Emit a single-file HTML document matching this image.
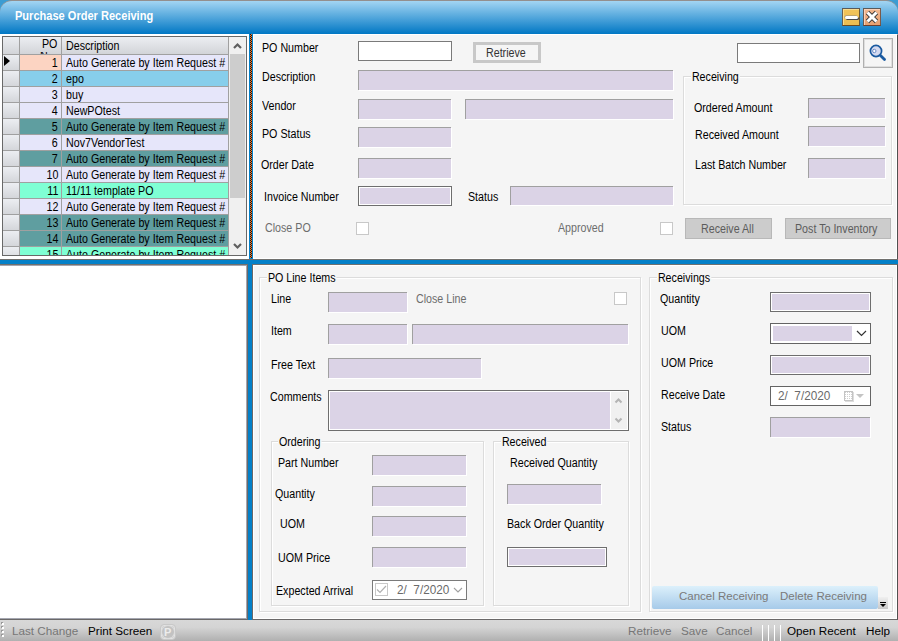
<!DOCTYPE html>
<html><head><meta charset="utf-8"><style>
*{margin:0;padding:0;box-sizing:border-box}
html,body{width:898px;height:641px;overflow:hidden;background:#f5f5f5;font-family:"Liberation Sans",sans-serif;font-size:11px;color:#000}
.a{position:absolute}
.t{position:absolute;white-space:nowrap;line-height:12px;font-size:12px;transform:scaleX(0.89);transform-origin:0 0}
.tb{position:absolute;background:#dbd3e6;border-top:1px solid #a0a0a0;border-left:1px solid #a0a0a0;box-shadow:1px 1px 0 #fff}
.tbd{position:absolute;background:#dbd3e6;border:1px solid #6e6e6e;box-shadow:inset 0 0 0 1px #fff}
.gb{position:absolute;border:1px solid #dcdcdc;box-shadow:inset 1px 1px 0 #fff,1px 1px 0 #fff}
.gt{position:absolute;white-space:nowrap;line-height:12px;font-size:12px;transform:scaleX(0.89);transform-origin:0 0;background:#f5f5f5;padding:0 1px}
.cb{position:absolute;width:13px;height:13px;border:1px solid #c8c8c8;background:#fff}
.g{color:#6d6d6d}
.g2{color:#5c5c5c}
.row{position:absolute;left:2px;width:227px;height:16px}
.rh{position:absolute;left:0;top:0;width:17px;height:16px;background:linear-gradient(#eceef2,#d4d6da);border-right:1px solid #a0a0a0;border-bottom:1px solid #a0a0a0}
.c1{position:absolute;left:17px;top:0;width:42px;height:16px;border-right:1px solid #a0a0a0;border-bottom:1px solid #a0a0a0;text-align:right;padding-right:4px;line-height:15px;font-size:12px}
.c2{position:absolute;left:59px;top:0;width:167px;height:16px;border-bottom:1px solid #a0a0a0;border-right:1px solid #a0a0a0;overflow:hidden}
.sb{font-size:11.7px;line-height:14px;transform:none}
</style></head><body>

<div class="a" style="left:0;top:0;width:14px;height:14px;background:#3c9cd2"></div><div class="a" style="left:884px;top:0;width:14px;height:14px;background:#3c9cd2"></div>
<div class="a" style="left:0;top:0;width:898px;height:34px;border-radius:12px 12px 0 0;background:linear-gradient(#a3d5f3,#0077c4);border-top:1px solid #938f8e;box-shadow:inset 0 0 0 0 #000"></div>
<div class="t" style="left:15px;top:9px;color:#fff;font-weight:bold;font-size:13px;line-height:14px;transform:scaleX(0.85)">Purchase Order Receiving</div>
<div class="a" style="left:842px;top:8px;width:18px;height:18px;background:linear-gradient(#f2c45a,#ecbc50);border:1px solid;border-color:#5a5a5a #6a5a3a #6a4a20 #6a6050;box-shadow:inset 1px 1px 0 #f8dc90"><div class="a" style="left:2px;top:7px;width:13px;height:3px;background:#fff;border-radius:1.5px;box-shadow:1px 1px 0 #4a4a4a,-0.5px -0.5px 0 #8a8a8a"></div></div>
<div class="a" style="left:863px;top:8px;width:18px;height:18px;background:linear-gradient(#f2b890,#e8a070);border:1px solid;border-color:#5a5a5a #7a5a4a #6a4030 #6a5a50;box-shadow:inset 1px 1px 0 #f8d0b8"><svg class="a" style="left:0;top:0" width="16" height="16"><path d="M3.5 3.5L12.5 12.5M12.5 3.5L3.5 12.5" stroke="#3a3a3a" stroke-width="4.6"/><path d="M3.5 3.5L12.5 12.5M12.5 3.5L3.5 12.5" stroke="#fff" stroke-width="3"/></svg></div>
<div class="a" style="left:0;top:34px;width:249px;height:225px;background:#fff"></div>
<div class="a" style="left:253px;top:34px;width:645px;height:225px;background:#f5f5f5;border-top:1px solid #fff;border-left:1px solid #fff;border-right:1px solid #505050;box-shadow:inset -1px -1px 0 #fff"></div>
<div class="a" style="left:249px;top:34px;width:4px;height:225px;background:#0480c8"></div>
<div class="a" style="left:250px;top:34px;width:2px;height:224px;background:repeating-conic-gradient(#f07828 0 25%,#181818 0 50%) 0 0/2px 2px"></div>
<div class="a" style="left:0;top:259px;width:898px;height:1px;background:#70706e"></div>
<div class="a" style="left:0;top:260px;width:898px;height:4px;background:#0480c8"></div>
<div class="a" style="left:0;top:264px;width:248px;height:356px;background:#fff;border-top:1px solid #70706e;border-right:1px solid #6a6868;border-bottom:1px solid #6a6868;box-shadow:inset -1px -1px 0 #a4a6b0,inset 0 1px 0 #a4a6b0"></div>
<div class="a" style="left:248px;top:264px;width:4px;height:356px;background:#0480c8"></div>
<div class="a" style="left:252px;top:264px;width:646px;height:356px;background:#f5f5f5;border-top:1px solid #70706e;border-left:1px solid #6a6868;border-bottom:1px solid #6a6868;border-right:1px solid #505050;box-shadow:inset 1px 1px 0 #fff,inset -1px -1px 0 #fff"></div>
<div class="a" style="left:2px;top:36px;width:245px;height:220px;border:1px solid #686868;background:#fff;overflow:hidden">
<div class="a" style="left:0;top:0;width:226px;height:17px;background:linear-gradient(#eceef2,#d2d4d8)"></div>
<div class="a" style="left:16px;top:0;width:1px;height:17px;background:#a0a0a0"></div>
<div class="a" style="left:58px;top:0;width:1px;height:17px;background:#a0a0a0"></div>
<div class="a" style="left:225px;top:0;width:1px;height:17px;background:#a0a0a0"></div>
<div class="a" style="left:0;top:17px;width:226px;height:1px;background:#a0a0a0"></div>
<div class="t" style="left:39px;top:1px">PO</div><div class="t" style="left:37px;top:15px;height:2px;overflow:hidden;line-height:12px"><span style="position:relative;top:-2px">N</span></div>
<div class="t" style="left:63px;top:3px">Description</div>
<div class="row" style="left:0;top:18px"><div class="rh"></div><div class="c1" style="background:#fcd4c2"></div><div class="c2" style="background:#e6e6fa"><div class="t" style="left:4px;top:2px">Auto Generate by Item Request #</div></div><div class="t" style="right:172px;top:2px;transform-origin:100% 0">1</div></div>
<div class="row" style="left:0;top:34px"><div class="rh"></div><div class="c1" style="background:#87ceeb"></div><div class="c2" style="background:#87ceeb"><div class="t" style="left:4px;top:2px">epo</div></div><div class="t" style="right:172px;top:2px;transform-origin:100% 0">2</div></div>
<div class="row" style="left:0;top:50px"><div class="rh"></div><div class="c1" style="background:#e6e6fa"></div><div class="c2" style="background:#e6e6fa"><div class="t" style="left:4px;top:2px">buy</div></div><div class="t" style="right:172px;top:2px;transform-origin:100% 0">3</div></div>
<div class="row" style="left:0;top:66px"><div class="rh"></div><div class="c1" style="background:#e6e6fa"></div><div class="c2" style="background:#e6e6fa"><div class="t" style="left:4px;top:2px">NewPOtest</div></div><div class="t" style="right:172px;top:2px;transform-origin:100% 0">4</div></div>
<div class="row" style="left:0;top:82px"><div class="rh"></div><div class="c1" style="background:#5f9ea0"></div><div class="c2" style="background:#5f9ea0"><div class="t" style="left:4px;top:2px">Auto Generate by Item Request #</div></div><div class="t" style="right:172px;top:2px;transform-origin:100% 0">5</div></div>
<div class="row" style="left:0;top:98px"><div class="rh"></div><div class="c1" style="background:#e6e6fa"></div><div class="c2" style="background:#e6e6fa"><div class="t" style="left:4px;top:2px">Nov7VendorTest</div></div><div class="t" style="right:172px;top:2px;transform-origin:100% 0">6</div></div>
<div class="row" style="left:0;top:114px"><div class="rh"></div><div class="c1" style="background:#5f9ea0"></div><div class="c2" style="background:#5f9ea0"><div class="t" style="left:4px;top:2px">Auto Generate by Item Request #</div></div><div class="t" style="right:172px;top:2px;transform-origin:100% 0">7</div></div>
<div class="row" style="left:0;top:130px"><div class="rh"></div><div class="c1" style="background:#e6e6fa"></div><div class="c2" style="background:#e6e6fa"><div class="t" style="left:4px;top:2px">Auto Generate by Item Request #</div></div><div class="t" style="right:172px;top:2px;transform-origin:100% 0">10</div></div>
<div class="row" style="left:0;top:146px"><div class="rh"></div><div class="c1" style="background:#7fffd4"></div><div class="c2" style="background:#7fffd4"><div class="t" style="left:4px;top:2px">11/11 template PO</div></div><div class="t" style="right:172px;top:2px;transform-origin:100% 0">11</div></div>
<div class="row" style="left:0;top:162px"><div class="rh"></div><div class="c1" style="background:#e6e6fa"></div><div class="c2" style="background:#e6e6fa"><div class="t" style="left:4px;top:2px">Auto Generate by Item Request #</div></div><div class="t" style="right:172px;top:2px;transform-origin:100% 0">12</div></div>
<div class="row" style="left:0;top:178px"><div class="rh"></div><div class="c1" style="background:#5f9ea0"></div><div class="c2" style="background:#5f9ea0"><div class="t" style="left:4px;top:2px">Auto Generate by Item Request #</div></div><div class="t" style="right:172px;top:2px;transform-origin:100% 0">13</div></div>
<div class="row" style="left:0;top:194px"><div class="rh"></div><div class="c1" style="background:#5f9ea0"></div><div class="c2" style="background:#5f9ea0"><div class="t" style="left:4px;top:2px">Auto Generate by Item Request #</div></div><div class="t" style="right:172px;top:2px;transform-origin:100% 0">14</div></div>
<div class="row" style="left:0;top:210px"><div class="rh"></div><div class="c1" style="background:#7fffd4"></div><div class="c2" style="background:#7fffd4"><div class="t" style="left:4px;top:2px">Auto Generate by Item Request #</div></div><div class="t" style="right:172px;top:2px;transform-origin:100% 0">15</div></div>
<div class="a" style="left:1px;top:19px;width:0;height:0;border-top:5.5px solid transparent;border-bottom:5.5px solid transparent;border-left:6px solid #000"></div>
<div class="a" style="left:226px;top:0;width:17px;height:218px;background:#f0f0f0"></div>
<div class="a" style="left:227px;top:17px;width:15px;height:144px;background:#cdcdcd"></div>
<svg class="a" style="left:229px;top:4px" width="11" height="9"><path d="M2 7L5.5 3.5L9 7" stroke="#606060" stroke-width="2.2" fill="none"/></svg>
<svg class="a" style="left:229px;top:205px" width="11" height="9"><path d="M2 2L5.5 5.5L9 2" stroke="#606060" stroke-width="2.2" fill="none"/></svg>
</div>
<div class="t " style="left:262px;top:42px">PO Number</div>
<div class="a" style="left:358px;top:41px;width:94px;height:20px;background:#fff;border:1px solid #7a7a7a"></div>
<div class="a" style="left:473px;top:42px;width:68px;height:21px;background:#f5f5f5;border:3px solid #c8c8c8"></div>
<div class="t" style="left:486px;top:47px;color:#333">Retrieve</div>
<div class="a" style="left:737px;top:43px;width:123px;height:20px;background:#fff;border:1px solid #7a7a7a"></div>
<div class="a" style="left:863px;top:38px;width:30px;height:30px;background:#f5f5f5;border:1px solid #b0b0b0;box-shadow:inset 0 0 0 1px #dedede"></div>
<svg class="a" style="left:863px;top:38px" width="30" height="30"><circle cx="13" cy="13" r="5.6" fill="#d4daf0" stroke="#1a5aa0" stroke-width="1.7"/><circle cx="11.3" cy="13" r="1.7" fill="#fff" stroke="#6a8cc8" stroke-width="1"/><path d="M17.5 17.5L21.5 21.5" stroke="#1a5aa0" stroke-width="2.8" stroke-linecap="round"/></svg>
<div class="t " style="left:262px;top:71px">Description</div>
<div class="tb" style="left:358px;top:70px;width:315px;height:20px"></div>
<div class="t " style="left:262px;top:100px">Vendor</div>
<div class="tb" style="left:358px;top:99px;width:93px;height:20px"></div>
<div class="tb" style="left:465px;top:99px;width:208px;height:20px"></div>
<div class="t " style="left:262px;top:128px">PO Status</div>
<div class="tb" style="left:358px;top:127px;width:93px;height:20px"></div>
<div class="t " style="left:261px;top:159px">Order Date</div>
<div class="tb" style="left:358px;top:158px;width:93px;height:20px"></div>
<div class="t " style="left:264px;top:191px">Invoice Number</div>
<div class="tbd" style="left:358px;top:186px;width:94px;height:20px"></div>
<div class="t " style="left:468px;top:191px">Status</div>
<div class="tb" style="left:510px;top:186px;width:163px;height:19px"></div>
<div class="t g" style="left:265px;top:222px">Close PO</div>
<div class="cb" style="left:356px;top:222px"></div>
<div class="t g" style="left:558px;top:222px">Approved</div>
<div class="cb" style="left:660px;top:222px"></div>
<div class="gb" style="left:683px;top:76px;width:209px;height:129px"></div>
<div class="gt" style="left:691px;top:71px">Receiving</div>
<div class="t " style="left:694px;top:102px">Ordered Amount</div>
<div class="tb" style="left:808px;top:98px;width:77px;height:20px"></div>
<div class="t " style="left:695px;top:129px">Received Amount</div>
<div class="tb" style="left:808px;top:126px;width:77px;height:20px"></div>
<div class="t " style="left:695px;top:159px">Last Batch Number</div>
<div class="tb" style="left:808px;top:158px;width:77px;height:20px"></div>
<div class="a" style="left:685px;top:218px;width:87px;height:21px;background:#cccccc;border:1px solid #b8b8b8"></div>
<div class="t g2" style="left:701px;top:223px">Receive All</div>
<div class="a" style="left:785px;top:218px;width:106px;height:21px;background:#cccccc;border:1px solid #b8b8b8"></div>
<div class="t g2" style="left:795px;top:223px">Post To Inventory</div>
<div class="gb" style="left:259px;top:277px;width:382px;height:335px"></div>
<div class="gt" style="left:267px;top:272px">PO Line Items</div>
<div class="t " style="left:271px;top:293px">Line</div>
<div class="tb" style="left:328px;top:292px;width:79px;height:20px"></div>
<div class="t g" style="left:416px;top:293px">Close Line</div>
<div class="cb" style="left:614px;top:292px"></div>
<div class="t " style="left:271px;top:325px">Item</div>
<div class="tb" style="left:328px;top:324px;width:79px;height:20px"></div>
<div class="tb" style="left:412px;top:324px;width:216px;height:20px"></div>
<div class="t " style="left:271px;top:359px">Free Text</div>
<div class="tb" style="left:328px;top:358px;width:153px;height:20px"></div>
<div class="t " style="left:270px;top:391px">Comments</div>
<div class="tbd" style="left:328px;top:390px;width:301px;height:41px"></div>
<div class="a" style="left:610px;top:392px;width:17px;height:37px;background:#f0f0f0;border-left:1px solid #fff"></div>
<svg class="a" style="left:614px;top:396px" width="10" height="30"><path d="M1.5 6.5L4.5 3.5L7.5 6.5M1.5 22.5L4.5 25.5L7.5 22.5" stroke="#b4b4b4" stroke-width="2" fill="none"/></svg>
<div class="gb" style="left:271px;top:441px;width:213px;height:165px"></div>
<div class="gt" style="left:278px;top:436px">Ordering</div>
<div class="t " style="left:278px;top:457px">Part Number</div>
<div class="tb" style="left:372px;top:455px;width:94px;height:20px"></div>
<div class="t " style="left:275px;top:488px">Quantity</div>
<div class="tb" style="left:372px;top:486px;width:94px;height:20px"></div>
<div class="t " style="left:280px;top:518px">UOM</div>
<div class="tb" style="left:372px;top:516px;width:94px;height:20px"></div>
<div class="t " style="left:278px;top:552px">UOM Price</div>
<div class="tb" style="left:372px;top:547px;width:94px;height:20px"></div>
<div class="t " style="left:276px;top:585px">Expected Arrival</div>
<div class="a" style="left:372px;top:580px;width:95px;height:20px;background:#fff;border:1px solid #7a7a7a"></div>
<div class="a" style="left:375px;top:583px;width:13px;height:13px;border:1px solid #c8c8c8"></div>
<svg class="a" style="left:375px;top:583px" width="13" height="13"><path d="M2 6.5L5 9.5L11 3" stroke="#b0b0b0" stroke-width="1.2" fill="none"/></svg>
<div class="t g" style="left:397px;top:584px;font-size:12px;line-height:13px;color:#6a6a6a;transform:scaleX(0.98)">2/&nbsp; 7/2020</div>
<svg class="a" style="left:453px;top:587px" width="10" height="6"><path d="M1 1L5 5L9 1" stroke="#a0a0a0" stroke-width="1.1" fill="none"/></svg>
<div class="gb" style="left:493px;top:441px;width:136px;height:165px"></div>
<div class="gt" style="left:501px;top:436px">Received</div>
<div class="t " style="left:510px;top:457px">Received Quantity</div>
<div class="tb" style="left:507px;top:484px;width:94px;height:20px"></div>
<div class="t " style="left:507px;top:518px">Back Order Quantity</div>
<div class="tbd" style="left:507px;top:547px;width:100px;height:20px"></div>
<div class="gb" style="left:649px;top:277px;width:244px;height:335px"></div>
<div class="gt" style="left:657px;top:272px">Receivings</div>
<div class="t " style="left:660px;top:293px">Quantity</div>
<div class="tbd" style="left:770px;top:292px;width:101px;height:20px"></div>
<div class="t " style="left:661px;top:325px">UOM</div>
<div class="a" style="left:770px;top:323px;width:101px;height:21px;background:#fff;border:1px solid #646464"></div>
<div class="a" style="left:773px;top:326px;width:79px;height:15px;background:#dbd3e6"></div>
<svg class="a" style="left:856px;top:330px" width="11" height="7"><path d="M1 1L5.5 5.5L10 1" stroke="#333" stroke-width="1.2" fill="none"/></svg>
<div class="t " style="left:661px;top:357px">UOM Price</div>
<div class="tbd" style="left:770px;top:355px;width:101px;height:20px"></div>
<div class="t " style="left:661px;top:389px">Receive Date</div>
<div class="a" style="left:770px;top:386px;width:101px;height:20px;background:#fff;border:1px solid #646464"></div>
<div class="t" style="left:778px;top:390px;font-size:12px;line-height:13px;color:#6a6a6a;transform:scaleX(0.98)">2/&nbsp; 7/2020</div>
<div class="a" style="left:844px;top:391px;width:9px;height:10px;border:1px solid #c4c4c4;background:linear-gradient(90deg,transparent 50%,#fff 50%) 0 0/2px 2px,linear-gradient(transparent 50%,#fff 50%) 0 0/2px 2px,#d0d0d0;box-shadow:1px 1px 0 #ddd"></div>
<div class="a" style="left:856px;top:394px;width:0;height:0;border-left:4px solid transparent;border-right:4px solid transparent;border-top:4px solid #c4c4c4"></div>
<div class="t " style="left:661px;top:421px">Status</div>
<div class="tb" style="left:770px;top:417px;width:100px;height:20px"></div>
<div class="a" style="left:652px;top:586px;width:226px;height:23px;background:linear-gradient(#dcf0fb,#a6cae9);border-radius:2px"></div>
<div class="t sb" style="left:679px;top:589px;color:#7a7a7a;font-size:11.5px">Cancel Receiving</div>
<div class="t sb" style="left:780px;top:589px;color:#7a7a7a;font-size:11.5px">Delete Receiving</div>
<div class="a" style="left:878px;top:597px;width:10px;height:12px;background:linear-gradient(#f0f0f0,#c8c8c8)"></div>
<div class="a" style="left:880px;top:602px;width:6px;height:1px;background:#000"></div>
<div class="a" style="left:880px;top:604px;width:0;height:0;border-left:3px solid transparent;border-right:3px solid transparent;border-top:3px solid #000"></div>
<div class="a" style="left:0;top:620px;width:898px;height:21px;background:linear-gradient(#d8d8d8 0%,#d4d4d4 35%,#b0b0b0 100%)"></div>
<div class="a" style="left:2px;top:623px;width:2px;height:2px;background:#fff;box-shadow:-1px -1px 0 #999"></div>
<div class="a" style="left:2px;top:627px;width:2px;height:2px;background:#fff;box-shadow:-1px -1px 0 #999"></div>
<div class="a" style="left:2px;top:631px;width:2px;height:2px;background:#fff;box-shadow:-1px -1px 0 #999"></div>
<div class="a" style="left:2px;top:635px;width:2px;height:2px;background:#fff;box-shadow:-1px -1px 0 #999"></div>
<div class="t sb" style="left:12px;top:624px;color:#767676">Last Change</div>
<div class="t sb" style="left:88px;top:624px;color:#000">Print Screen</div>
<div class="a" style="left:160px;top:624px;width:16px;height:16px;border-radius:4px;border:1px solid #c8c8c8;box-shadow:inset 0 0 0 1px #e4e4e4;background:#cdcdcd"></div>
<div class="a" style="left:162px;top:626px;width:12px;height:12px;border-radius:50%;background:#c2c2c2;box-shadow:0 0 0 1px #dcdcdc"></div>
<div class="t" style="left:164px;top:626px;color:#ececec;font-weight:bold;font-size:11px;transform:none">P</div>
<div class="t sb" style="left:628px;top:624px;color:#767676">Retrieve</div>
<div class="t sb" style="left:681px;top:624px;color:#767676">Save</div>
<div class="t sb" style="left:716px;top:624px;color:#767676">Cancel</div>
<div class="a" style="left:762px;top:625px;width:1px;height:16px;background:#fff"></div>
<div class="a" style="left:768px;top:625px;width:1px;height:16px;background:#fff"></div>
<div class="a" style="left:774px;top:625px;width:1px;height:16px;background:#fff"></div>
<div class="a" style="left:780px;top:625px;width:1px;height:16px;background:#fff"></div>
<div class="t sb" style="left:787px;top:624px;color:#000">Open Recent</div>
<div class="t sb" style="left:866px;top:624px;color:#000">Help</div>
</body></html>
